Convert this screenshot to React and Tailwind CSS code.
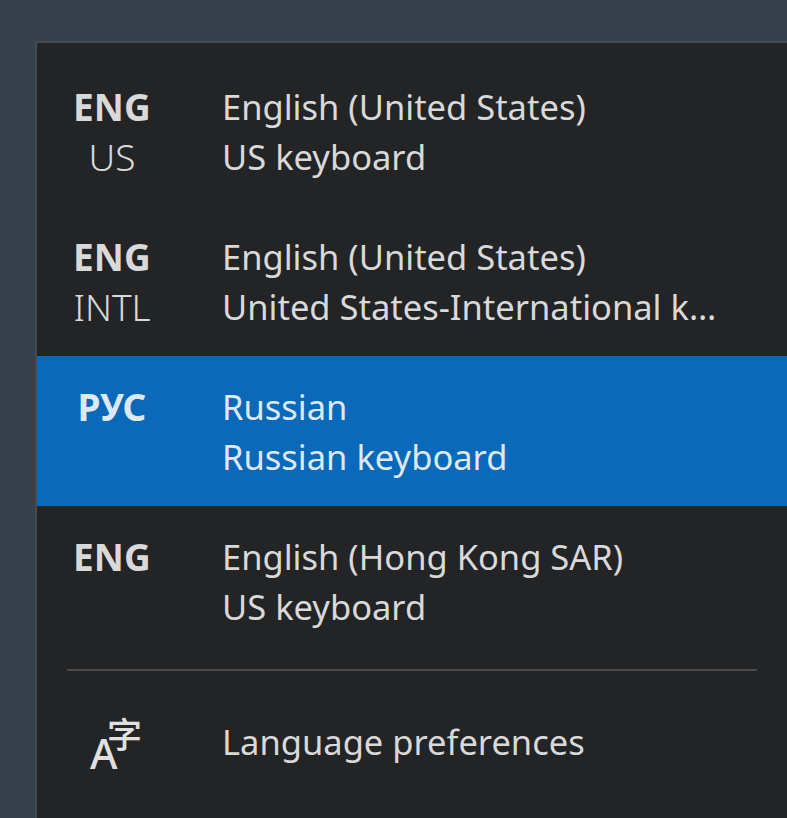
import React from "react";

const rows = [
  { code: "ENG", sub: "US", title: "English (United States)", desc: "US keyboard" },
  { code: "ENG", sub: "INTL", title: "English (United States)", desc: "United States-International keyboard" },
  { code: "РУС", title: "Russian", desc: "Russian keyboard", active: true },
  { code: "ENG", title: "English (Hong Kong SAR)", desc: "US keyboard" },
];

const LanguageIcon = () => (
  <svg width="60" height="62" viewBox="0 0 60 62" className="text-[#e0e0e0]">
    <text x="8" y="58" fontSize="42" fontWeight="500" fill="currentColor" fontFamily="'Noto Sans', sans-serif">A</text>
    <text x="25" y="37" fontSize="35" fontWeight="500" fill="currentColor" fontFamily="'Noto Sans CJK SC', sans-serif">字</text>
  </svg>
);

export default function App() {
  return (
    <div className="h-[818px] w-[787px] overflow-hidden bg-[#38404b] pt-[41px] pl-[35px] font-['Noto_Sans','Open_Sans',sans-serif] text-[#d9d9d9]">
      <div className="h-[800px] border-t-2 border-l-2 border-[#454951] bg-[#232426] pt-[13px]">
        {rows.map((row, i) => (
          <div
            key={i}
            className={`flex h-[150px] items-start pt-[26px] ${row.active ? "bg-[#0a69b8] text-[#dde8f3]" : ""}`}
          >
            <div className="w-[150px] shrink-0 text-center text-[37px] leading-[50px]">
              <div className="font-bold tracking-[0.2px]">{row.code}</div>
              {row.sub && <div className="font-light">{row.sub}</div>}
            </div>
            <div className="ml-[35px] w-[498px] min-w-0 text-[34.5px] leading-[50px]">
              <div className="truncate">{row.title}</div>
              <div className="truncate">{row.desc}</div>
            </div>
          </div>
        ))}
        <div className="mt-[13px] mr-[30px] ml-[30px] h-[2px] bg-[#4a4a4a]" />
        <div className="flex h-[142px] items-center">
          <div className="flex w-[150px] justify-center">
            <LanguageIcon />
          </div>
          <div className="ml-[35px] text-[34.5px] leading-[50px]">Language preferences</div>
        </div>
      </div>
    </div>
  );
}
